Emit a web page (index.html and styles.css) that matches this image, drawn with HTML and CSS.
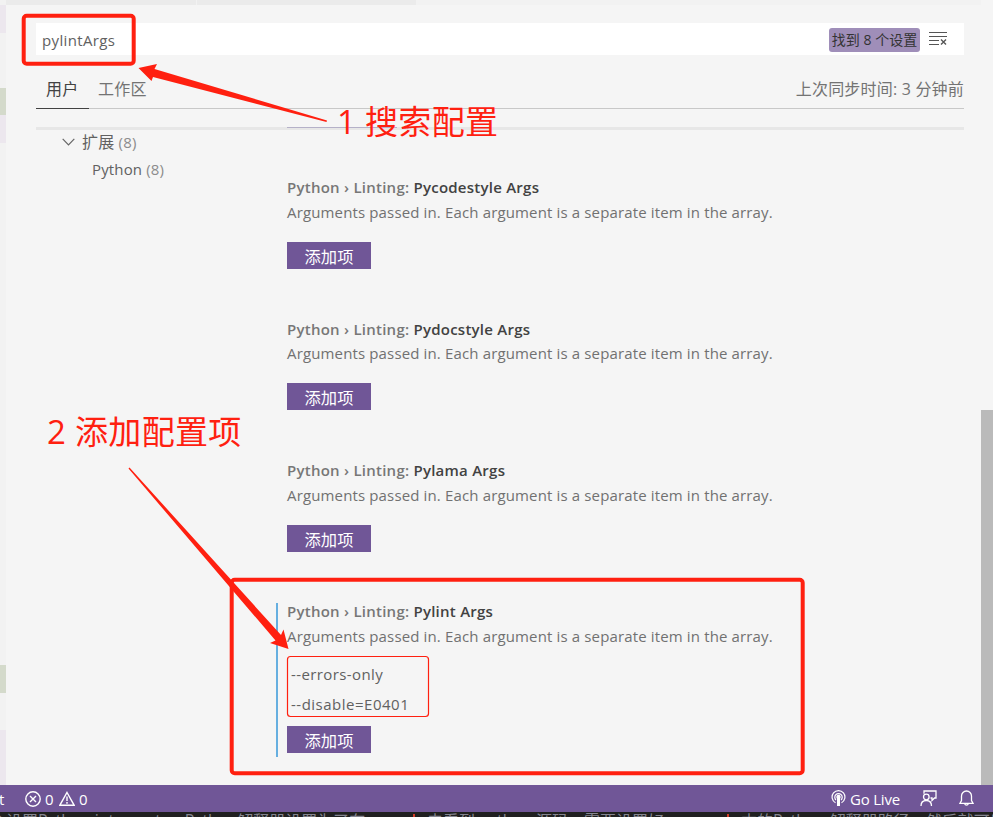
FILE: index.html
```
<!DOCTYPE html>
<html lang="zh-CN">
<head>
<meta charset="utf-8">
<title>设置</title>
<link rel="stylesheet" href="styles.css">
</head>
<body>
<div class="window">
  <div class="workspace">
    <aside class="gutter"><i class="g1"></i><i class="g2"></i><i class="g3"></i><i class="g4"></i><i class="g5"></i><i class="g6"></i><i class="g7"></i><i class="g8"></i></aside>
    <div class="editor">
      <div class="tabstrip"><i></i><i></i></div>
      <main class="settings">
        <div class="search">
          <span class="query">pylintArgs</span>
          <span class="count">找到 8 个设置</span>
          <svg class="clear" width="19" height="16" viewBox="0 0 19 16" fill="none" stroke="#555" stroke-width="1.1"><path d="M0 1.5H18M0 5.5H18M0 9.5H10M0 13.5H10"/><path d="M12 8.5L17 13.5M17 8.5L12 13.5" stroke-width="1.4"/></svg>
        </div>
        <nav class="scopes">
          <span class="scope active">用户</span>
          <span class="scope">工作区</span>
          <span class="sync">上次同步时间: 3 分钟前</span>
        </nav>
        <div class="divider"><i></i></div>
        <div class="body">
          <div class="tree">
            <div class="node"><svg width="13" height="8" viewBox="0 0 13 8" fill="none" stroke="#666" stroke-width="1.2"><path d="M.7 .8L6.5 6.8L12.3 .8"/></svg><span>扩展 <em>(8)</em></span></div>
            <div class="node child"><span>Python <em>(8)</em></span></div>
          </div>
          <div class="list">
            <section class="item"><h3><span>Python › Linting: </span>Pycodestyle Args</h3><p>Arguments passed in. Each argument is a separate item in the array.</p><button>添加项</button></section>
            <section class="item tall"><h3><span>Python › Linting: </span>Pydocstyle Args</h3><p>Arguments passed in. Each argument is a separate item in the array.</p><button>添加项</button></section>
            <section class="item"><h3><span>Python › Linting: </span>Pylama Args</h3><p>Arguments passed in. Each argument is a separate item in the array.</p><button>添加项</button></section>
            <section class="item modified"><h3><span>Python › Linting: </span>Pylint Args</h3><p>Arguments passed in. Each argument is a separate item in the array.</p>
              <ul><li>--errors-only</li><li>--disable=E0401</li></ul><button>添加项</button></section>
          </div>
        </div>
      </main>
    </div>
    <div class="scrollbar"></div>
  </div>
  <footer class="status">
    <span class="cut">t</span>
    <svg class="err" width="16" height="16" viewBox="0 0 16 16" fill="none" stroke="#fff" stroke-width="1.4"><circle cx="8" cy="8" r="7.2"/><path d="M5 5L11 11M11 5L5 11"/></svg>
    <span class="num">0</span>
    <svg class="warn" width="16" height="16" viewBox="0 0 16 16" fill="none" stroke="#fff" stroke-width="1.4"><path d="M8 1.5L15.2 14.3H.8ZM8 5.5V10M8 11V12.7"/></svg>
    <span class="num">0</span>
    <svg class="live" width="15" height="17" viewBox="0 0 15 17" fill="none" stroke="#fff" stroke-width="1.2"><path d="M4.5 12.7A6.4 6.4 0 1 1 10.5 12.7M5 10A3.7 3.7 0 1 1 10 10"/><circle cx="7.5" cy="7" r="1.6" fill="#fff"/><path d="M7.5 8V16" stroke-width="3"/></svg>
    <span class="golive">Go Live</span>
    <svg class="feedback" width="17" height="17" viewBox="0 0 17 17" fill="none" stroke="#fff" stroke-width="1.3"><path d="M4 3.8V1H16V8H14.5L12 10.5V8H10.5"/><circle cx="6.3" cy="7" r="2.8"/><path d="M1 16C1 12.5 3 10.5 6.3 10.5S11.5 12.5 11.5 16"/></svg>
    <svg class="bell" width="15" height="17" viewBox="0 0 15 17" fill="none" stroke="#fff" stroke-width="1.3"><path d="M2.5 10.5V6A5 5 0 0 1 12.5 6V10.5L14 13.3H1ZM5.7 13.8A1.9 1.9 0 0 0 9.3 13.8"/></svg>
  </footer>
  <div class="behind"><span class="b1">会设置<i>Python interpreter: Python</i>解释器设置为了在</span><b></b><span class="b2">去看到 <i>python</i> 源码，需要设置好</span><b></b><span class="b3">本的<i>Python</i> 解释器路径，然后就可以</span></div>

  <svg class="marks" width="993" height="817" viewBox="0 0 993 817" fill="none" stroke="#ff2010">
    <rect x="23.7" y="15.7" width="110" height="48" rx="3" stroke-width="4"/>
    <rect x="231.7" y="579.7" width="571" height="193.5" rx="3" stroke-width="4"/>
    <rect x="287.5" y="656.5" width="141" height="60" rx="3" stroke-width="1.2"/>
    <path fill="#ff2010" stroke="none" d="M138.5 68L157 64L154.5 69L327 120.5L326.5 122L153 77L151.5 81Z"/>
    <path fill="#ff2010" stroke="none" d="M129.5 467.5L281 635L283.5 629.5L288.5 649L270 643L275.5 640.5L128.5 468.5Z"/>
  </svg>
  <div class="note first">1 搜索配置</div>
  <div class="note second">2 添加配置项</div>
</div>
</body>
</html>
```
FILE: styles.css
```
* { box-sizing: border-box; }
body { margin: 0; font: 15px/20px "Open Sans", "Noto Sans CJK SC", sans-serif; color: #616161; }
i, em { font-style: normal; }
svg { flex: none; display: block; }
.window { position: relative; width: 993px; height: 817px; overflow: hidden; display: flex; flex-direction: column; background: #f5f5f5; white-space: nowrap; }
.workspace { height: 785px; display: flex; }
.gutter { width: 6px; display: flex; flex-direction: column; background: #f2f2f2; }
.g1 { height: 5px; }
.g2 { height: 28px; background: #ece7ee; }
.g3 { height: 55px; }
.g4 { height: 27px; background: #d4dacb; }
.g5 { height: 28px; background: #ece7ee; }
.g6 { height: 522px; }
.g7 { height: 28px; background: #d4dacb; }
.g8 { height: 55px; margin-top: 37px; background: #ece7ee; }
.editor { width: 975px; }
.tabstrip { height: 5px; display: flex; gap: 1px; background: #f2f2f2; }
.tabstrip i { width: 190px; background: #ebebeb; }
.tabstrip i + i { width: 219px; }
.settings { margin: 18px 0 0 30px; width: 928px; }
.search { height: 32px; background: #fff; display: flex; align-items: center; padding: 0 16px 0 6px; }
.query { padding-top: 1px; letter-spacing: .35px; }
.count { margin-left: auto; width: 91px; height: 24px; line-height: 23px; margin-top: 1px; border-radius: 3px; background: #9f8eb9; color: #333; font-size: 14px; text-align: center; }
.clear { margin-left: 9px; }
.scopes { height: 54px; border-bottom: 1px solid #c8c8c8; display: flex; font-size: 16px; letter-spacing: .2px; color: #737373; }
.scope { height: 54px; line-height: 68px; margin-left: 9px; }
.scope.active { width: 53px; margin: 0; padding-left: 10px; color: #424242; border-bottom: 1px solid #424242; }
.sync { margin-left: auto; line-height: 68px; }
.divider { margin-top: 18px; height: 3px; background: #e7e7e7; }
.divider i { display: block; margin-left: 251px; width: 110px; height: 1px; background: #b5b1c8; }
.body { display: flex; }
.tree { width: 240px; margin-top: -2px; }
.node { height: 27px; display: flex; align-items: center; padding: 1px 0 0 26px; gap: 7px; font-size: 16px; letter-spacing: .15px; }
.node em { color: #8c8c8c; font-size: 15px; }
.child { padding-left: 56px; font-size: 15px; }
.list { padding-top: 45px; }
.item { height: 141px; padding-left: 11px; }
.item.tall { height: 142px; }
h3 { margin: 0; font-size: 15px; line-height: 25px; font-weight: 600; letter-spacing: .245px; color: #424242; white-space: pre; }
.tall h3 { padding-top: 1px; margin-bottom: -1px; }
h3 span { color: #777; }
p { margin: 0; line-height: 25px; letter-spacing: .143px; color: #717171; }
button { display: block; margin-top: 17px; width: 84px; height: 27px; padding: 2px 0 0; border: 0; background: #705697; color: #fff; font: 16.3px/25px "Noto Sans CJK SC", sans-serif; }
.modified { position: relative; }
.modified::before { content: ""; position: absolute; left: 0; top: 4px; width: 2px; height: 154px; background: #66afe0; }
ul { list-style: none; margin: 10px 0 0; padding: 0 0 0 4px; }
li { height: 30px; line-height: 30px; letter-spacing: .4px; }
li + li { letter-spacing: .5px; }
ul + button { margin-top: 7px; }
.scrollbar { width: 12px; height: 375px; margin-top: 410px; background: #bababa; }
.status { height: 27px; background: #705697; color: #fff; display: flex; align-items: center; padding-right: 19px; }
.status span { line-height: 27px; padding-top: 2px; }
.cut { width: 25px; text-indent: -1px; }
.num { width: 13px; margin-left: 4px; }
.err + .num { width: 14px; }
.live { margin-left: auto; }
.status .golive { margin-left: 4px; width: 50px; letter-spacing: -.2px; }
.feedback { margin-left: 20px; }
.bell { margin-left: 22px; }
.behind { height: 5px; overflow: hidden; display: flex; background: #202020; color: #85858f; font-size: 16px; line-height: 19px; }
.behind span { flex: none; }
.behind span i { position: relative; top: -1px; }
.behind b { flex: none; width: 2px; height: 5px; background: #d23c28; margin: 2px 12px 0 0; }
.b1 { width: 413px; text-indent: -10px; }
.b2 { width: 300px; }
.marks { position: absolute; left: 0; top: 0; }
.note { position: absolute; color: #ff2010; font-size: 33px; line-height: 40px; letter-spacing: .3px; }
.first { left: 337px; top: 102px; }
.second { left: 47px; top: 412px; }
```
